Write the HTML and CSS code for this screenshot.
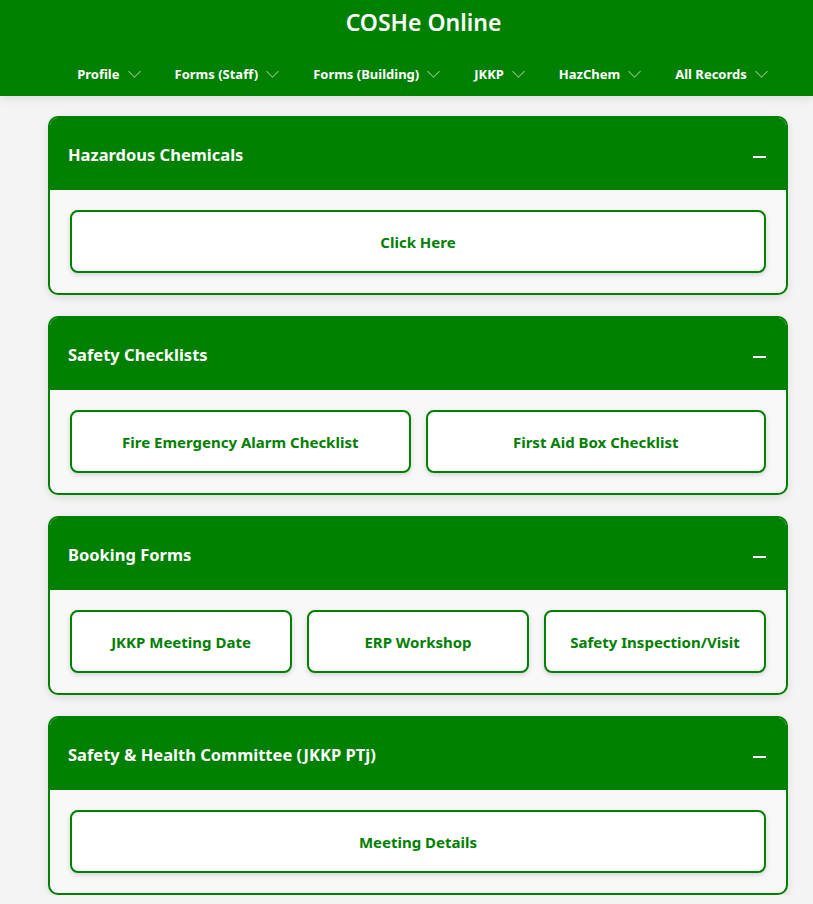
FILE: index.html
```html
<!DOCTYPE html>
<html lang="en">
<head>
    <meta charset="UTF-8">
    <meta name="viewport" content="width=device-width, initial-scale=1.0">
    <title>COSHe Online</title>
    <link rel="stylesheet" href="styles.css">
</head>
<body>

    <header class="topbar">
        <h1 class="site-title">COSHe Online</h1>
        <nav class="menu">
            <a class="menu-item">Profile <span class="chev"></span></a>
            <a class="menu-item">Forms (Staff) <span class="chev"></span></a>
            <a class="menu-item">Forms (Building) <span class="chev"></span></a>
            <a class="menu-item">JKKP <span class="chev"></span></a>
            <a class="menu-item">HazChem <span class="chev"></span></a>
            <a class="menu-item">All Records <span class="chev"></span></a>
        </nav>
    </header>

    <main class="content">

        <section class="panel">
            <div class="panel-head">
                <h2>Hazardous Chemicals</h2>
                <span class="collapse"></span>
            </div>
            <div class="panel-body cols-1">
                <a class="link-btn">Click Here</a>
            </div>
        </section>

        <section class="panel">
            <div class="panel-head">
                <h2>Safety Checklists</h2>
                <span class="collapse"></span>
            </div>
            <div class="panel-body cols-2">
                <a class="link-btn">Fire Emergency Alarm Checklist</a>
                <a class="link-btn">First Aid Box Checklist</a>
            </div>
        </section>

        <section class="panel">
            <div class="panel-head">
                <h2>Booking Forms</h2>
                <span class="collapse"></span>
            </div>
            <div class="panel-body cols-3">
                <a class="link-btn">JKKP Meeting Date</a>
                <a class="link-btn">ERP Workshop</a>
                <a class="link-btn">Safety Inspection/Visit</a>
            </div>
        </section>

        <section class="panel">
            <div class="panel-head">
                <h2>Safety &amp; Health Committee (JKKP PTj)</h2>
                <span class="collapse"></span>
            </div>
            <div class="panel-body cols-1">
                <a class="link-btn">Meeting Details</a>
            </div>
        </section>

    </main>

</body>
</html>
```

FILE: styles.css
```css
body {
    font-family: "Noto Sans", "Open Sans", Arial, sans-serif;
    margin: 0;
    background-color: #f4f4f4;
}

/* Cabeçalho */
.topbar {
    background-color: #008000;
    color: white;
    height: 96px;
    box-shadow: 0 4px 8px rgba(0, 0, 0, 0.08);
}

.site-title {
    margin: 0;
    padding-top: 6px;
    padding-left: 34px;
    font-size: 23px;
    font-weight: 600;
    text-align: center;
}

.menu {
    display: flex;
    justify-content: center;
    gap: 36px;
    margin-top: 27px;
    padding-left: 30px;
}

.menu-item {
    font-size: 13px;
    font-weight: 700;
    display: flex;
    align-items: center;
    gap: 8px;
    cursor: pointer;
}

.chev {
    width: 8px;
    height: 8px;
    border-right: 1.5px solid rgba(255, 255, 255, 0.55);
    border-bottom: 1.5px solid rgba(255, 255, 255, 0.55);
    transform: rotate(45deg);
    margin-top: -5px;
    margin-left: 2px;
}

/* Conteúdo */
.content {
    width: 740px;
    margin: 20px 0 0 48px;
    display: flex;
    flex-direction: column;
    gap: 21px;
}

.panel {
    border: 2px solid #008000;
    border-radius: 10px;
    background-color: #f8f8f8;
    box-shadow: 0 3px 8px rgba(0, 0, 0, 0.1);
    overflow: hidden;
}

.panel-head {
    background-color: #008000;
    color: white;
    height: 72px;
    display: flex;
    align-items: center;
    justify-content: space-between;
    padding: 0 20px 0 18px;
}

.panel-head h2 {
    margin: 0;
    font-size: 16.5px;
    font-weight: 700;
}

.collapse {
    width: 13px;
    height: 2px;
    background-color: white;
    margin-top: 6px;
}

.panel-body {
    display: grid;
    gap: 15px;
    padding: 20px;
}

.cols-1 { grid-template-columns: 1fr; }
.cols-2 { grid-template-columns: 1fr 1fr; }
.cols-3 { grid-template-columns: 1fr 1fr 1fr; }

.link-btn {
    height: 59px;
    display: flex;
    justify-content: center;
    align-items: center;
    background-color: white;
    border: 2px solid #008000;
    border-radius: 8px;
    color: #008000;
    font-size: 15px;
    font-weight: 700;
    box-shadow: 0 2px 5px rgba(0, 0, 0, 0.15);
    cursor: pointer;
}
```
